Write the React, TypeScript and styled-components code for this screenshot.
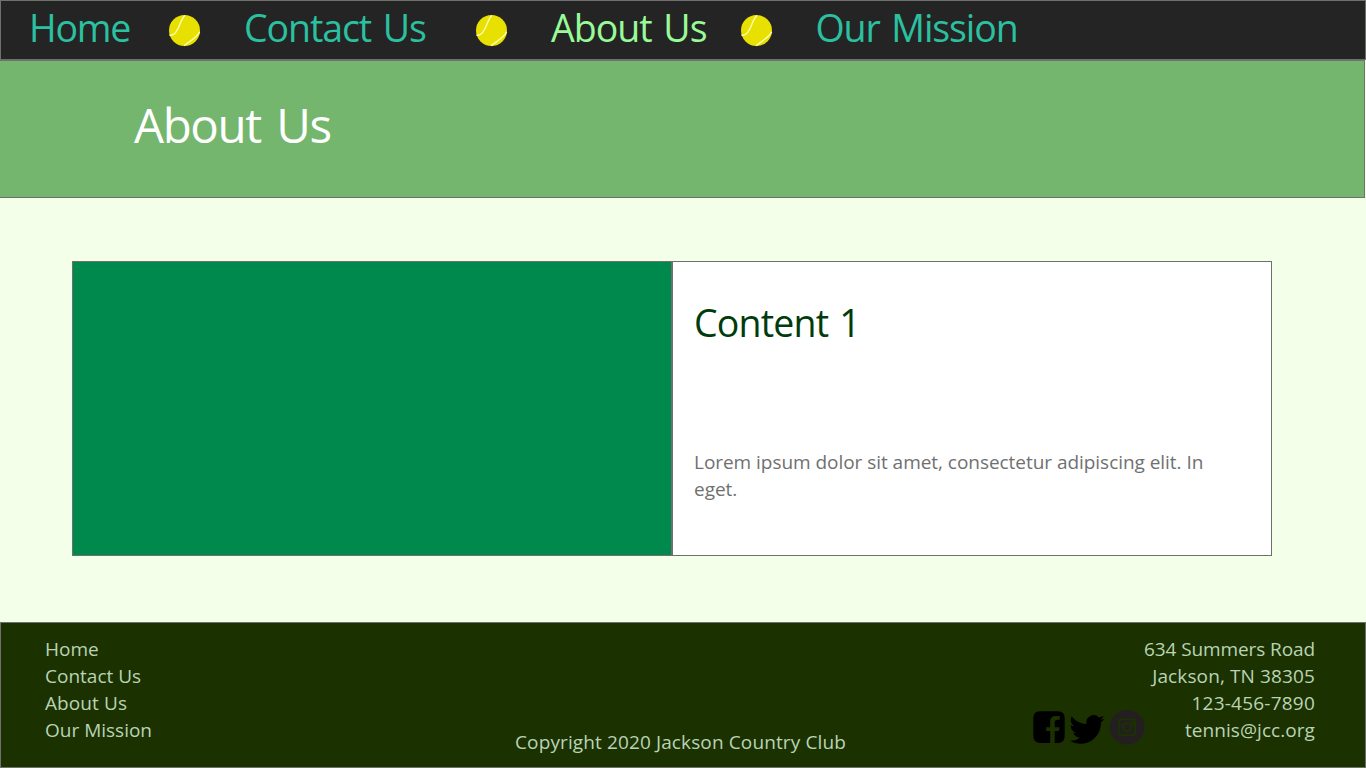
import React from "react";
import styled, { createGlobalStyle } from "styled-components";

const GlobalStyle = createGlobalStyle`
  * { box-sizing: border-box; }
  body { margin: 0; background: #f3ffe8; font-family: "Segoe UI", "Open Sans", "Noto Sans", sans-serif; }
  h1, h2, p, ul { margin: 0; padding: 0; font-weight: 400; }
  ul { list-style: none; }
`;

const line = "#6f716f";

const Page = styled.div`
  display: flex;
  flex-direction: column;
  width: 1366px;
  height: 768px;
  overflow: hidden;
`;

const Nav = styled.nav`
  display: grid;
  grid-template-columns: 140px 75px 232px 75px 190px 74.5px 300px;
  align-items: start;
  height: 60px;
  padding-left: 28px;
  background: #242424;
  border: 1px solid ${line};
`;

const NavLink = styled.a<{ $track: number; $active?: boolean }>`
  font-size: 37.5px;
  line-height: 54px;
  white-space: nowrap;
  letter-spacing: ${(p) => p.$track}px;
  word-spacing: 3px;
  color: ${(p) => (p.$active ? "#98fb98" : "#2bc0a0")};
`;

const Ball = styled.svg`
  display: block;
  width: 32px;
  height: 32px;
  margin-top: 14px;
`;

const Hero = styled.header`
  width: 1365px;
  height: 138px;
  padding: 32px 0 0 134px;
  background: #74b66d;
  border: solid ${line};
  border-width: 1px 1px 1px 0;
`;

const Title = styled.h1`
  font-size: 47.5px;
  line-height: 64px;
  letter-spacing: -1.4px;
  word-spacing: 4.5px;
  color: #fff;
`;

const Main = styled.main`
  display: grid;
  grid-template-columns: 600px 600px;
  flex: 1;
  padding: 63px 94px 66px 72px;
`;

const Picture = styled.div`
  background: #00894c;
  border: 1px solid ${line};
`;

const Card = styled.section`
  display: flex;
  flex-direction: column;
  gap: 100px;
  padding: 35px 21px 0;
  background: #fff;
  border: 1px solid ${line};
`;

const CardTitle = styled.h2`
  font-size: 37.5px;
  line-height: 52px;
  letter-spacing: -0.8px;
  word-spacing: 2px;
  color: #003b0b;
`;

const CardText = styled.p`
  width: 540px;
  font-size: 19px;
  line-height: 27px;
  letter-spacing: -0.04px;
  color: #707070;
`;

const Footer = styled.footer`
  display: grid;
  grid-template-columns: 470px 518px 112px minmax(0, 1fr);
  height: 146px;
  padding: 13px 50px 0 44px;
  background: #1c3100;
  border: 1px solid ${line};
  color: #b8d4b4;
  font-size: 19px;
  line-height: 27px;
`;

const FooterLine = styled.li<{ $track: number }>`
  white-space: nowrap;
  letter-spacing: ${(p) => p.$track}px;
`;

const Address = styled.ul`
  display: flex;
  flex-direction: column;
  align-items: flex-end;
`;

const Copyright = styled.p`
  padding-top: 93px;
  white-space: nowrap;
  letter-spacing: 0.12px;
`;

const Social = styled.div`
  display: flex;
  align-items: flex-start;
  padding-top: 74px;
`;

const SocialIcon = styled.svg`
  display: block;
  flex: none;
`;

const TennisBall = () => (
  <Ball viewBox="0 0 32 32">
    <circle cx="15.5" cy="15.5" r="15.5" fill="#e8e000" />
    <path d="M.5 20C5.8 21.8 8.9 14.6 11 9 12.6 5 13.8 2.4 15.8.4M30.6 16.8C28.4 22.4 20.2 26.5 15 30.8" fill="none" stroke="#fffcb0" strokeWidth="1.4" />
  </Ball>
);

const pages = [
  { name: "Home", nav: -1.2, foot: 0 },
  { name: "Contact Us", nav: -1.1, foot: 0 },
  { name: "About Us", nav: -1, foot: 0.1 },
  { name: "Our Mission", nav: -1.1, foot: 0 },
].map((p) => ({ ...p, active: p.name === "About Us" }));

const address = [
  { text: "634 Summers Road", track: -0.1 },
  { text: "Jackson, TN 38305", track: 0.12 },
  { text: "123-456-7890", track: 0.22 },
  { text: "tennis@jcc.org", track: 0.06 },
];

export default function App() {
  return (
    <Page>
      <GlobalStyle />
      <Nav>
        {pages.map((p, i) => (
          <React.Fragment key={p.name}>
            {i > 0 && <TennisBall />}
            <NavLink $track={p.nav} $active={p.active}>{p.name}</NavLink>
          </React.Fragment>
        ))}
      </Nav>
      <Hero>
        <Title>About Us</Title>
      </Hero>
      <Main>
        <Picture />
        <Card>
          <CardTitle>Content 1</CardTitle>
          <CardText>Lorem ipsum dolor sit amet, consectetur adipiscing elit. In eget.</CardText>
        </Card>
      </Main>
      <Footer>
        <ul>
          {pages.map((p) => (
            <FooterLine key={p.name} $track={p.foot}>{p.name}</FooterLine>
          ))}
        </ul>
        <Copyright>Copyright 2020 Jackson Country Club</Copyright>
        <Social>
          <SocialIcon width="36" height="34" viewBox="0 0 36 34">
            <path d="M7 1.2H25Q31.7 1.5 31.7 8V26Q31.7 32.5 25 33H21.7V21H26L26.5 17.3H21.7V12.5C21.7 10.5 22.7 9.7 24.4 9.7H26.7V6H23C19.2 6 17.2 8 17.2 11.6V17.3H13.2V21H17.2V33H7Q.3 32.5.3 26V8Q.3 1.5 7 1.2Z" fill="#000" />
          </SocialIcon>
          <SocialIcon width="40" height="36" viewBox="0 0 40 36">
            <path transform="translate(.3 1.9) scale(1.47)" d="M23.95 4.57a10 10 0 0 1-2.82.78 4.96 4.96 0 0 0 2.16-2.73c-.95.56-2 .96-3.13 1.19a4.92 4.92 0 0 0-8.38 4.48A13.93 13.93 0 0 1 1.64 3.16a4.92 4.92 0 0 0 1.52 6.57 4.9 4.9 0 0 1-2.23-.61v.06a4.92 4.92 0 0 0 3.95 4.83 5 5 0 0 1-2.21.08 4.94 4.94 0 0 0 4.6 3.42A9.87 9.87 0 0 1 0 19.54a13.99 13.99 0 0 0 7.55 2.21c9.05 0 14-7.5 14-13.98 0-.21 0-.42-.02-.63a9.94 9.94 0 0 0 2.42-2.57Z" fill="#000" />
          </SocialIcon>
          <SocialIcon width="36" height="35" viewBox="0 0 36 35">
            <ellipse cx="18" cy="17.2" rx="17.5" ry="17.3" fill="#231f20" />
            <g fill="none" stroke="#1c3100" strokeWidth="1.8">
              <rect x="10.3" y="9.3" width="15.8" height="15.8" rx="1.5" />
              <circle cx="18.2" cy="17.2" r="4" />
              <path d="M10.3 15H14.2M22.2 15H26.1" strokeWidth="1.4" />
            </g>
            <rect x="21.7" y="10.7" width="3" height="3" fill="#1c3100" />
          </SocialIcon>
        </Social>
        <Address>
          {address.map((a) => (
            <FooterLine key={a.text} $track={a.track}>{a.text}</FooterLine>
          ))}
        </Address>
      </Footer>
    </Page>
  );
}
